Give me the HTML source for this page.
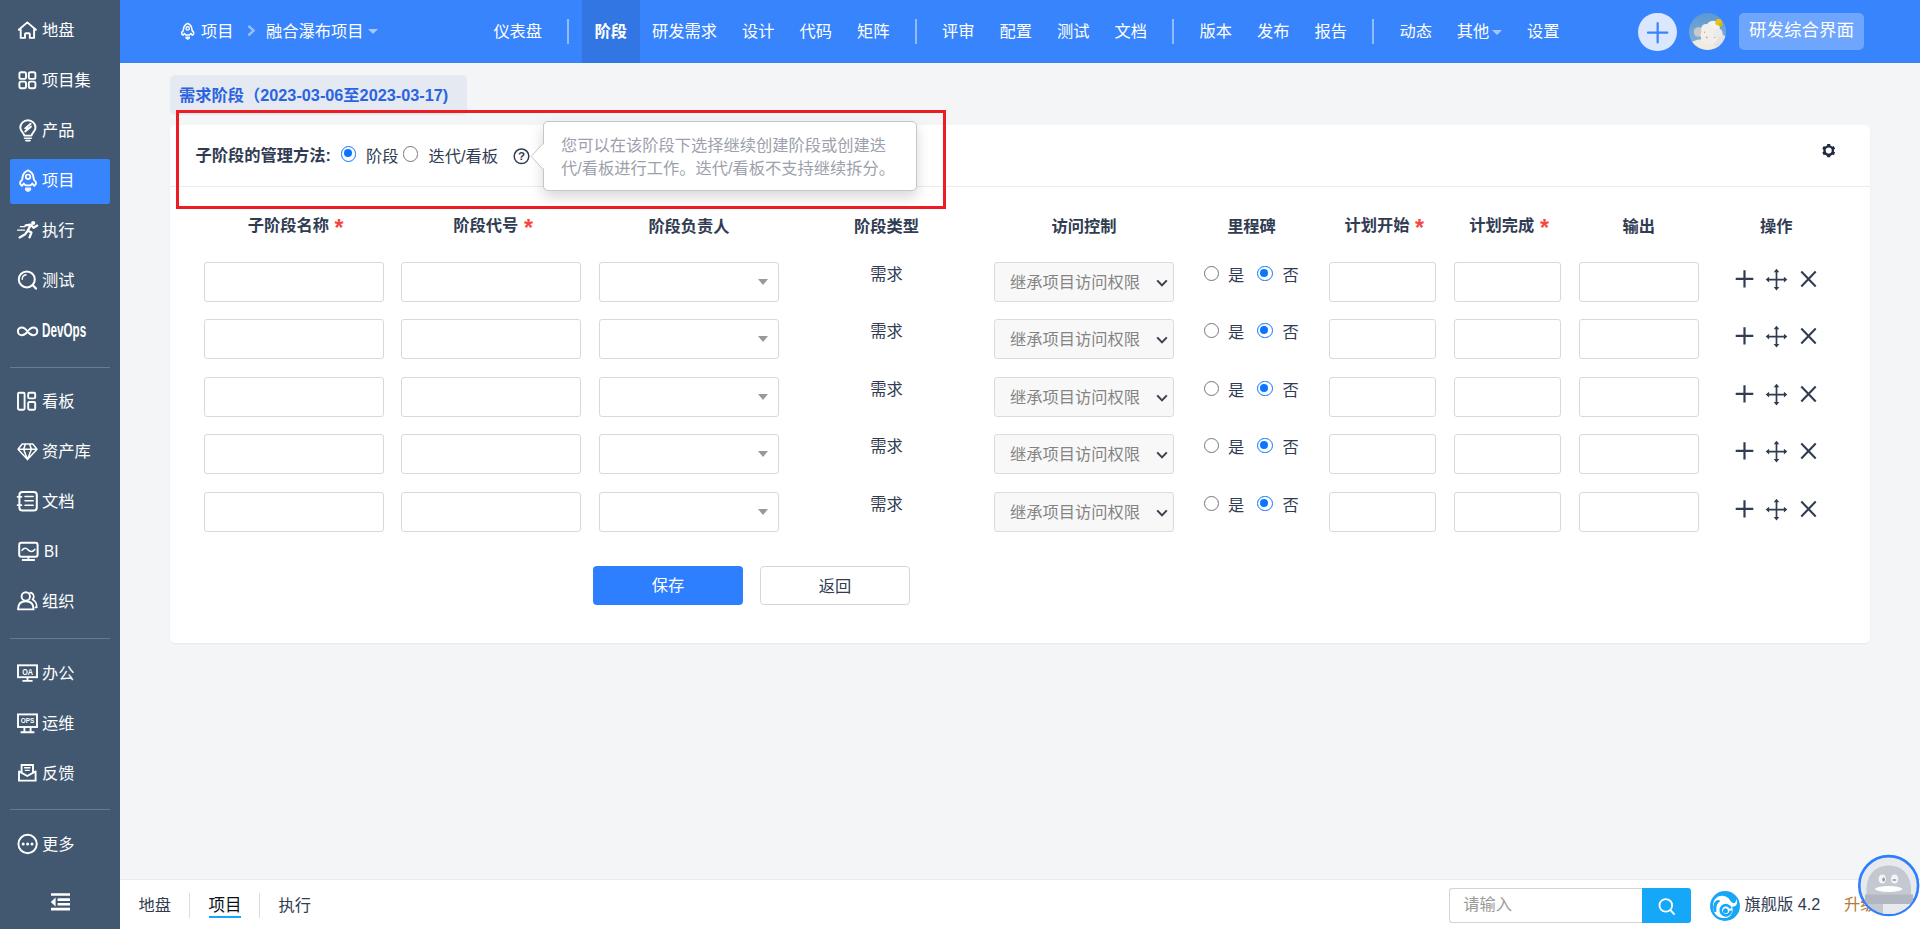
<!DOCTYPE html>
<html lang="zh-CN"><head><meta charset="utf-8"><title>融合瀑布项目 - 阶段</title>
<style>
*{box-sizing:border-box}
html,body{margin:0;padding:0}
body{width:1920px;height:929px;overflow:hidden;position:relative;background:#f4f5f7;font-family:"Liberation Sans","Noto Sans CJK SC",sans-serif;font-size:16.25px;color:#313c52;line-height:1.2}
.ic{position:absolute;display:block;overflow:visible}
#side{position:absolute;left:0;top:0;width:120px;height:929px;background:#425870}
.mi{position:absolute;left:10px;width:100px;height:45px;border-radius:2.5px}
.mi.act{background:#3884fc}
.ml{position:absolute;left:42px;height:45px;line-height:43.6px;color:#fff;font-size:16.25px;white-space:nowrap}
.mt.dev{display:inline-block;font-weight:bold;font-size:19.5px;transform:scaleX(.6);transform-origin:0 50%;letter-spacing:0}
.mt.bi{display:inline-block;font-size:17px;transform:scaleX(.9);transform-origin:0 50%;margin-left:2px}
.sdiv{position:absolute;left:10px;width:100px;height:1.25px;background:#677d96}
#head{position:absolute;left:120px;top:0;width:1800px;height:62.5px;background:#3884fc;color:#fff}
#head *{position:absolute}
.hl{top:0;height:62.5px;line-height:63px;white-space:nowrap;color:#fff;font-size:16.25px}
.ni{top:0;height:62.5px;line-height:63px;text-align:center;color:#fff;font-size:16.25px;white-space:nowrap}
.ni.act{background:#3276e3;font-weight:bold}
.nd{top:19px;width:2px;height:24.5px;background:rgba(255,255,255,.45)}
.car{position:static !important;display:inline-block;width:0;height:0;border:5px solid transparent;border-top:5.5px solid rgba(255,255,255,.55);border-bottom:0;vertical-align:middle;margin-left:3px;margin-top:-1px}
#tab{position:absolute;left:170px;top:75px;width:297px;height:39.5px;background:#e5e9f1;border-radius:5px;color:#2a64e0;font-weight:bold;font-size:16.25px;line-height:40px;padding-left:9px;white-space:nowrap}
#panel{position:absolute;left:170px;top:125px;width:1700px;height:518px;background:#fff;border-radius:5px;box-shadow:0 1px 2px rgba(0,0,0,.06)}
#sep{position:absolute;left:170px;top:186px;width:1700px;height:1px;background:#ececec}
#red{position:absolute;left:176px;top:110px;width:770px;height:98.6px;border:3px solid #ed1c24}
.th{position:absolute;top:213.2px;height:24px;line-height:24px;text-align:center;font-weight:bold;white-space:nowrap}
.req{color:#f5473f;font-weight:bold;font-size:23px;line-height:10px;vertical-align:-4.6px;margin-left:1px}
.inp{position:absolute;height:40px;background:#fff;border:1.25px solid #d9d9d9;border-radius:3px}
.car2{position:absolute;right:9.8px;top:15.6px;width:0;height:0;border:5.6px solid transparent;border-top:6px solid #999;border-bottom:0}
.tx{position:absolute;height:24px;line-height:24px;text-align:center}
.sel{position:absolute;height:40px;background:#f8f8f8;border:1.25px solid #dcdcdc;border-radius:3px;color:#848484;line-height:38px;padding-left:15px;white-space:nowrap}
.rad{position:absolute;width:15.6px;height:15.6px;border-radius:50%;border:1.3px solid #767676;background:#fff}
.rad.on{border:1.7px solid #0b75ff}
.rad.on:after{content:"";position:absolute;left:2.1px;top:2.1px;width:8px;height:8px;border-radius:50%;background:#0b75ff}
.rt{position:absolute;height:24px;line-height:24px;margin-top:.6px}
.btn{position:absolute;top:565.8px;width:150px;height:38.8px;line-height:38px;text-align:center;border-radius:4px;font-size:16.25px}
#foot{position:absolute;left:120px;top:878.8px;width:1800px;height:50px;background:#fff;border-top:1px solid #e9ebef}
#foot .ft{position:absolute;top:0;height:49px;line-height:50px;white-space:nowrap}
</style></head><body>
<div id="side">
<div class="mi" style="top:9px"></div><svg class="ic" style="left:14px;top:16.5px" width="26" height="26" viewBox="14 16.5 26 26" fill="none" stroke="#fff" stroke-width="1.9" stroke-linejoin="round" stroke-linecap="round"><path d="M18.8 29.3 L27.3 21.9 L35.9 29.3 M20.7 28.5 V37.4 H25 V33.8 Q25 32.8 26 32.8 H28.8 Q29.8 32.8 29.8 33.8 V37.4 H34.1 V28.5"/></svg><div class="ml" style="top:9px"><span class="mt">地盘</span></div>
<div class="mi" style="top:59px"></div><svg class="ic" style="left:14px;top:66.5px" width="26" height="26" viewBox="14 66.5 26 26" fill="none" stroke="#fff" stroke-width="1.9" stroke-linejoin="round" stroke-linecap="round"><rect x="19.4" y="71.8" width="6.6" height="6.6" rx="1.6"/><rect x="19.4" y="81.1" width="6.6" height="6.6" rx="1.6"/><rect x="28.8" y="71.8" width="6.6" height="6.6" rx="1.6"/><rect x="28.8" y="81.1" width="6.6" height="6.6" rx="1.6"/></svg><div class="ml" style="top:59px"><span class="mt">项目集</span></div>
<div class="mi" style="top:109px"></div><svg class="ic" style="left:14px;top:118.5px" width="26" height="26" viewBox="14 118.5 26 26" fill="none" stroke="#fff" stroke-width="1.9" stroke-linejoin="round" stroke-linecap="round"><path d="M24.2 135.1 C24.2 132.7 20.3 130.7 20.3 127.3 A7.6 7.6 0 0 1 35.5 127.3 C35.5 130.7 31.6 132.7 31.6 135.1 Z"/><path d="M24.6 137.8 H31.2 M25.8 140.1 H30" stroke-width="1.6"/><path d="M30.6 123.3 L25.2 127.9 H28.4 L31 125.9 M25.2 130.9 L30.6 126.5 " stroke-width="1.9"/></svg><div class="ml" style="top:109px"><span class="mt">产品</span></div>
<div class="mi act" style="top:159px"></div><svg class="ic" style="left:14px;top:167.5px" width="26" height="26" viewBox="14 167.5 26 26" fill="none" stroke="#fff" stroke-width="1.9" stroke-linejoin="round" stroke-linecap="round"><path d="M28.05 169.9 C24.6 171.3 22.7 174.3 22.5 177.3 C22.3 178.3 22.1 179.3 21.9 179.7 C20.6 180.5 20.1 181.5 20.1 182.5 C20.1 183.9 20.8 184.9 21.9 185.3 L23.8 183.1 L25.6 184.9 H30.5 L32.3 183.1 L34.2 185.3 C35.3 184.9 36 183.9 36 182.5 C36 181.5 35.5 180.5 34.2 179.7 C34 179.3 33.8 178.3 33.5 177.3 C33.4 174.3 31.5 171.3 28.05 169.9 Z" stroke-width="1.9"/><circle cx="28.05" cy="176.3" r="2.3" stroke-width="1.7"/><path d="M25 186.9 H31.1 V189.7 L28.05 191.7 L25 189.7 Z" fill="#fff" stroke="none" opacity=".9"/></svg><div class="ml" style="top:159px"><span class="mt">项目</span></div>
<div class="mi" style="top:209px"></div><svg class="ic" style="left:14px;top:217.2px" width="26" height="26" viewBox="14 217.2 26 26" fill="none" stroke="#fff" stroke-width="1.9" stroke-linejoin="round" stroke-linecap="round"><circle cx="33.2" cy="223.2" r="2.1" fill="#fff" stroke="none"/><path d="M25.6 225.6 L30.6 224.79999999999998 L33.6 228.0 L37.2 225.79999999999998 M30.8 225.2 L27.8 230.6 L31.4 232.79999999999998 L29.6 237.6 M27.6 231.2 L24.8 234.79999999999998 L19.6 237.6" stroke-width="2.3"/><path d="M20.4 226.79999999999998 H25 M17.6 230.39999999999998 H24.6" stroke-width="1.3"/></svg><div class="ml" style="top:209px"><span class="mt">执行</span></div>
<div class="mi" style="top:259px"></div><svg class="ic" style="left:14px;top:266.5px" width="26" height="26" viewBox="14 266.5 26 26" fill="none" stroke="#fff" stroke-width="1.9" stroke-linejoin="round" stroke-linecap="round"><circle cx="26.8" cy="278.9" r="8" stroke-width="2"/><path d="M32.8 284.7 L36 288.1" stroke-width="2.2"/><path d="M22.2 278.7 A4.6 4.6 0 0 1 26 274.3" stroke-width="1.4"/></svg><div class="ml" style="top:259px"><span class="mt">测试</span></div>
<div class="mi" style="top:309px"></div><svg class="ic" style="left:14px;top:317.5px" width="26" height="26" viewBox="14 317.5 26 26" fill="none" stroke="#fff" stroke-width="1.9" stroke-linejoin="round" stroke-linecap="round"><path d="M27.6 331.1 C25.6 327.9 23.6 326.9 21.8 326.9 A3.9 3.9 0 0 0 21.8 334.7 C23.6 334.7 25.6 333.7 27.6 331.1 C29.6 327.9 31.6 326.9 33.4 326.9 A3.9 3.9 0 0 1 33.4 334.7 C31.6 334.7 29.6 333.7 27.6 331.1 Z" stroke-width="2"/></svg><div class="ml" style="top:309px"><span class="mt dev">DevOps</span></div>
<div class="mi" style="top:380.25px"></div><svg class="ic" style="left:14px;top:387.75px" width="26" height="26" viewBox="14 387.75 26 26" fill="none" stroke="#fff" stroke-width="1.9" stroke-linejoin="round" stroke-linecap="round"><rect x="18" y="392.55" width="6.6" height="17" rx="1.2"/><rect x="28.2" y="392.55" width="7" height="5.6" rx="1.2"/><rect x="28.2" y="401.75" width="7" height="7.8" rx="1.2"/></svg><div class="ml" style="top:380.25px"><span class="mt">看板</span></div>
<div class="mi" style="top:430.25px"></div><svg class="ic" style="left:14px;top:437.75px" width="26" height="26" viewBox="14 437.75 26 26" fill="none" stroke="#fff" stroke-width="1.9" stroke-linejoin="round" stroke-linecap="round"><path d="M22.2 443.75 H32.8 L37 448.95 L27.5 459.35 L18 448.95 Z M18 448.95 H37 M27.5 459.35 L23.6 448.95 L25.4 443.75 M27.5 459.35 L31.4 448.95 L29.6 443.75" stroke-width="1.5"/></svg><div class="ml" style="top:430.25px"><span class="mt">资产库</span></div>
<div class="mi" style="top:480.25px"></div><svg class="ic" style="left:14px;top:487.75px" width="26" height="26" viewBox="14 487.75 26 26" fill="none" stroke="#fff" stroke-width="1.9" stroke-linejoin="round" stroke-linecap="round"><rect x="19.4" y="491.75" width="17.4" height="18.6" rx="3" stroke-width="2"/><path d="M17.6 496.55 H21.4 M17.6 504.95 H21.4" stroke-width="1.8"/><path d="M25 496.35 H33.2 M25 500.55 H33.2 M25 504.95 H33.2" stroke-width="1.5"/></svg><div class="ml" style="top:480.25px"><span class="mt">文档</span></div>
<div class="mi" style="top:530.25px"></div><svg class="ic" style="left:14px;top:537.75px" width="26" height="26" viewBox="14 537.75 26 26" fill="none" stroke="#fff" stroke-width="1.9" stroke-linejoin="round" stroke-linecap="round"><rect x="19.2" y="542.55" width="18.4" height="14" rx="2.2" stroke-width="2"/><path d="M28.4 556.75 V559.55 M22.6 559.75 H34.2" stroke-width="1.8"/><path d="M22 550.15 C24 547.15 26.4 547.75 28.2 549.75 C30 551.75 32.6 551.75 34.8 549.15" stroke-width="1.6"/></svg><div class="ml" style="top:530.25px"><span class="mt bi">BI</span></div>
<div class="mi" style="top:580.25px"></div><svg class="ic" style="left:14px;top:588.45px" width="26" height="26" viewBox="14 588.45 26 26" fill="none" stroke="#fff" stroke-width="1.9" stroke-linejoin="round" stroke-linecap="round"><circle cx="25.8" cy="596.85" r="4.2"/><path d="M18 609.85 C18 604.0500000000001 21.6 601.6500000000001 25.8 601.6500000000001 C30 601.6500000000001 33.6 604.0500000000001 33.6 609.85 Z"/><path d="M30.2 593.0500000000001 A4 4 0 0 1 32.4 600.0500000000001 C35.2 601.25 36.8 604.0500000000001 36.8 607.85 H35.4" stroke-width="1.6"/></svg><div class="ml" style="top:580.25px"><span class="mt">组织</span></div>
<div class="mi" style="top:651.5px"></div><svg class="ic" style="left:14px;top:660.0px" width="26" height="26" viewBox="14 660.0 26 26" fill="none" stroke="#fff" stroke-width="1.9" stroke-linejoin="round" stroke-linecap="round"><rect x="18" y="665.3" width="19" height="11.9" stroke-width="1.9" stroke-linejoin="miter"/><path d="M27.5 677.2 V680.8 M22.4 680.9 H32.6" stroke-width="1.9" stroke-linecap="butt"/><text x="27.6" y="674.6" text-anchor="middle" font-family="Liberation Sans,sans-serif" font-weight="bold" font-size="9.2" fill="#fff" stroke="none" textLength="10.8" lengthAdjust="spacingAndGlyphs">OA</text></svg><div class="ml" style="top:651.5px"><span class="mt">办公</span></div>
<div class="mi" style="top:701.5px"></div><svg class="ic" style="left:14px;top:709.7px" width="26" height="26" viewBox="14 709.7 26 26" fill="none" stroke="#fff" stroke-width="1.9" stroke-linejoin="round" stroke-linecap="round"><rect x="18" y="714.1" width="19" height="12.6" stroke-width="1.9" stroke-linejoin="miter"/><path d="M24.4 726.7 V731.7 M30.6 726.7 V731.7 M20.6 731.9000000000001 H34.4" stroke-width="1.9" stroke-linecap="butt"/><text x="27.5" y="722.9000000000001" text-anchor="middle" font-family="Liberation Sans,sans-serif" font-weight="bold" font-size="7.8" fill="#fff" stroke="none" textLength="13.6" lengthAdjust="spacingAndGlyphs">OPS</text></svg><div class="ml" style="top:701.5px"><span class="mt">运维</span></div>
<div class="mi" style="top:751.5px"></div><svg class="ic" style="left:14px;top:760.0px" width="26" height="26" viewBox="14 760.0 26 26" fill="none" stroke="#fff" stroke-width="1.9" stroke-linejoin="round" stroke-linecap="round"><path d="M19 771.4 V780.6 H35.6 V771.4 M19 771.4 L27.3 776.0 L35.6 771.4 M21.6 772.6 V765.0 H33 V772.6" stroke-linejoin="miter" stroke-width="1.9"/><path d="M24.6 767.8 H30 M25.4 770.4 H29.2" stroke-width="1.4"/></svg><div class="ml" style="top:751.5px"><span class="mt">反馈</span></div>
<div class="mi" style="top:822.75px"></div><svg class="ic" style="left:14px;top:831.25px" width="26" height="26" viewBox="14 831.25 26 26" fill="none" stroke="#fff" stroke-width="1.9" stroke-linejoin="round" stroke-linecap="round"><circle cx="27.6" cy="844.25" r="9.2" stroke-width="1.9"/><circle cx="23.2" cy="844.25" r="1.5" fill="#fff" stroke="none"/><circle cx="27.6" cy="844.25" r="1.5" fill="#fff" stroke="none"/><circle cx="32" cy="844.25" r="1.5" fill="#fff" stroke="none"/></svg><div class="ml" style="top:822.75px"><span class="mt">更多</span></div>
<div class="sdiv" style="top:366.5px"></div>
<div class="sdiv" style="top:637.75px"></div>
<div class="sdiv" style="top:809px"></div>
<svg class="ic" style="left:48px;top:890px" width="26" height="24" viewBox="48 890 26 24"><path d="M51 893.2H70V895.8H51Z M57.6 898.3H70V900.9H57.6Z M57.6 902.9H70V905.5H57.6Z M51 907.8H70V910.4H51Z M55.6 897.4V906.4L50.8 901.9Z" fill="#fff"/></svg>
</div>
<div id="head">
<svg class="ic" style="left:58px;top:19px" width="20" height="26" viewBox="0 0 20 26" fill="none" stroke="#fff" stroke-linejoin="round"><g transform="translate(9.7 12.6) scale(.76) translate(-28.05 0)"><path d="M28.05 -10.6 C24.6 -9.2 22.7 -6.2 22.5 -3.2 C22.3 -2.2 22.1 -1.2 21.9 -0.8 C20.6 0 20.1 1 20.1 2 C20.1 3.4 20.8 4.4 21.9 4.8 L23.8 2.6 L25.6 4.4 H30.5 L32.3 2.6 L34.2 4.8 C35.3 4.4 36 3.4 36 2 C36 1 35.5 0 34.2 -0.8 C34 -1.2 33.8 -2.2 33.5 -3.2 C33.4 -6.2 31.5 -9.2 28.05 -10.6 Z" stroke-width="2"/><circle cx="28.05" cy="-4.2" r="2.2" stroke-width="1.8"/><path d="M25 6.4 H31.1 V9.2 L28.05 11.2 L25 9.2 Z" fill="#fff" stroke="none" opacity=".9"/></g></svg>
<span class="hl" style="left:81px">项目</span>
<svg class="ic" style="left:126px;top:22px" width="10" height="18" viewBox="0 0 10 18"><path d="M2.4 3.9 L7.6 8.6 L2.4 13.3" fill="none" stroke="rgba(255,255,255,.5)" stroke-width="2.3"/></svg>
<span class="hl" style="left:146px">融合瀑布项目</span><i class="car" style="position:absolute !important;left:245px;top:30px"></i>
<a class="ni" style="left:calc(-120px + 481px);width:73.5px">仪表盘</a>
<i class="nd" style="left:calc(-120px + 567.1px)"></i>
<a class="ni act" style="left:calc(-120px + 582px);width:57.5px">阶段</a>
<a class="ni" style="left:calc(-120px + 639.5px);width:90px">研发需求</a>
<a class="ni" style="left:calc(-120px + 729.5px);width:57.5px">设计</a>
<a class="ni" style="left:calc(-120px + 787px);width:57.5px">代码</a>
<a class="ni" style="left:calc(-120px + 844.5px);width:57.5px">矩阵</a>
<i class="nd" style="left:calc(-120px + 914.6px)"></i>
<a class="ni" style="left:calc(-120px + 929.5px);width:57.5px">评审</a>
<a class="ni" style="left:calc(-120px + 987px);width:57.5px">配置</a>
<a class="ni" style="left:calc(-120px + 1044.5px);width:57.5px">测试</a>
<a class="ni" style="left:calc(-120px + 1102px);width:57.5px">文档</a>
<i class="nd" style="left:calc(-120px + 1172.1px)"></i>
<a class="ni" style="left:calc(-120px + 1187px);width:57.5px">版本</a>
<a class="ni" style="left:calc(-120px + 1244.5px);width:57.5px">发布</a>
<a class="ni" style="left:calc(-120px + 1302px);width:57.5px">报告</a>
<i class="nd" style="left:calc(-120px + 1372.1px)"></i>
<a class="ni" style="left:calc(-120px + 1387px);width:57.5px">动态</a>
<a class="ni" style="left:calc(-120px + 1444.5px);width:70px">其他<i class="car"></i></a>
<a class="ni" style="left:calc(-120px + 1514.5px);width:57.5px">设置</a>
<div style="left:1518.4px;top:12.6px;width:38.6px;height:38.6px;border-radius:50%;background:#dbe7fe"></div>
<svg class="ic" style="left:1518px;top:12.5px" width="39" height="39" viewBox="0 0 39 39"><path d="M19.65 10.2V29.4M10 19.7H29.3" stroke="#3884fc" stroke-width="2.2" stroke-linecap="round" fill="none"/></svg>
<svg class="ic" style="left:1569px;top:13px" width="37" height="37" viewBox="0 0 37 37"><defs><clipPath id="av"><circle cx="18.5" cy="18.5" r="18.5"/></clipPath><linearGradient id="sky" x1="0" y1="0" x2="0" y2="1"><stop offset="0" stop-color="#5b98d1"/><stop offset="1" stop-color="#86b3d8"/></linearGradient></defs><g clip-path="url(#av)"><rect width="37" height="37" fill="url(#sky)"/><ellipse cx="15" cy="35" rx="17" ry="9" fill="#efeae2"/><circle cx="31" cy="28" r="7" fill="#e4e3e2"/><circle cx="9.5" cy="19" r="4.8" fill="#c8c9cb"/><circle cx="24" cy="14.5" r="6.8" fill="#f3f2f1"/><circle cx="17" cy="16" r="5" fill="#eeeeee"/><circle cx="20.5" cy="22.5" r="9" fill="#f2efeb"/><circle cx="29" cy="20" r="4.6" fill="#ebebeb"/><circle cx="29.6" cy="9.2" r="3.3" fill="#e3c417"/><circle cx="31.6" cy="11.4" r="2" fill="#d9b70f"/><circle cx="15.6" cy="19.2" r=".6" fill="#b58c7a"/><circle cx="25.8" cy="24.4" r=".6" fill="#b58c7a"/><ellipse cx="17.8" cy="24.6" rx=".7" ry="1" fill="#d58a84"/></g></svg>
<div style="left:1619px;top:13px;width:125px;height:37px;border-radius:5px;background:rgba(255,255,255,.28);font-size:17.5px;line-height:35px;text-align:center;color:#fff">研发综合界面</div>
</div>

<div id="tab">需求阶段（2023-03-06至2023-03-17)</div>
<div id="panel"></div>
<div id="sep"></div>
<div id="m1" style="position:absolute;left:195.5px;top:143px;height:24px;line-height:24px;font-weight:bold;white-space:nowrap">子阶段的管理方法:</div>
<i class="rad on" style="left:340.5px;top:146.2px"></i><div class="rt" style="left:366px;top:143px">阶段</div>
<i class="rad" style="left:402.5px;top:146.2px"></i><div class="rt" style="left:428.5px;top:143px">迭代/看板</div>
<svg class="ic" style="left:512px;top:147px" width="19" height="19" viewBox="0 0 19 19"><circle cx="9.5" cy="9.3" r="7.3" fill="none" stroke="#313c52" stroke-width="1.5"/><text x="9.5" y="13.4" text-anchor="middle" font-family="Liberation Sans,sans-serif" font-weight="bold" font-size="11.5" fill="#313c52">?</text></svg>
<div id="pop" style="position:absolute;left:542.5px;top:120.8px;width:374.3px;height:69.8px;background:#fff;border:1px solid #c6c6c6;border-radius:5px;box-shadow:0 6px 14px rgba(0,0,0,.16);color:#9ca1ab;line-height:23.2px;padding:12.1px 0 0 17.5px;white-space:nowrap">您可以在该阶段下选择继续创建阶段或创建迭<br>代/看板进行工作。迭代/看板不支持继续拆分。</div>
<svg class="ic" style="left:530px;top:143px" width="14" height="27" viewBox="0 0 14 27"><path d="M13 0.6 L1.2 13.4 L13 26.2" fill="#fff" stroke="#c6c6c6" stroke-width="1"/><path d="M13.3 1.4V25.4" stroke="#fff" stroke-width="1.8"/></svg>
<svg class="ic" style="left:1820.6px;top:143.4px" width="15.6" height="15.6" viewBox="0 0 17 17"><circle cx="8.4" cy="8.3" r="4.6" fill="none" stroke="#1f2a40" stroke-width="2.6"/><path d="M8.4 1.2V3.2M8.4 13.4V15.4M2.2 4.8L4 5.8M12.8 10.8L14.6 11.8M2.2 11.8L4 10.8M12.8 5.8L14.6 4.8" stroke="#1f2a40" stroke-width="3.4" fill="none"/></svg>
<div class="th" style="left:196.85px;width:197.5px;top:213.2px">子阶段名称 <b class=req>*</b></div>
<div class="th" style="left:394.35px;width:197.5px;top:213.2px">阶段代号 <b class=req>*</b></div>
<div class="th" style="left:590.25px;width:197.5px;top:214.2px">阶段负责人</div>
<div class="th" style="left:787.75px;width:197.5px;top:214.2px">阶段类型</div>
<div class="th" style="left:985.25px;width:197.5px;top:214.2px">访问控制</div>
<div class="th" style="left:1182.75px;width:137.5px;top:214.2px">里程碑</div>
<div class="th" style="left:1321.85px;width:124.75px;top:213.2px">计划开始 <b class=req>*</b></div>
<div class="th" style="left:1446.6px;width:125px;top:213.2px">计划完成 <b class=req>*</b></div>
<div class="th" style="left:1570px;width:137.5px;top:214.2px">输出</div>
<div class="th" style="left:1707.5px;width:137.5px;top:214.2px">操作</div>
<div class="inp" style="left:204px;top:262px;width:180px"></div>
<div class="inp" style="left:401px;top:262px;width:180px"></div>
<div class="inp" style="left:599px;top:262px;width:180px"><i class="car2"></i></div>
<div class="tx" style="left:787.75px;width:197.5px;top:262px">需求</div>
<div class="sel" style="left:994px;top:262px;width:180px"><span>继承项目访问权限</span><svg width="14" height="10" viewBox="0 0 14 10" style="position:absolute;left:160px;top:15px"><path d="M2.2 2.4 L7 7.4 L11.8 2.4" fill="none" stroke="#3a3f4a" stroke-width="2"/></svg></div>
<i class="rad" style="left:1203.5px;top:265.6px"></i><div class="rt" style="left:1228px;top:262px">是</div><i class="rad on" style="left:1257.3px;top:265.6px"></i><div class="rt" style="left:1282.5px;top:262px">否</div>
<div class="inp" style="left:1329px;top:262px;width:106.6px"></div>
<div class="inp" style="left:1454px;top:262px;width:106.6px"></div>
<div class="inp" style="left:1579px;top:262px;width:120px"></div>
<svg class="ic" style="left:1730px;top:264px" width="92" height="30" viewBox="1730 264 92 30" fill="none" stroke="#313c52" stroke-width="2"><path d="M1744.5 270.2V287.40000000000003 M1735.7 278.8H1753.3" stroke-width="2.2"/><path d="M1776.5 270.6V288.6 M1767.5 279.6H1785.5" stroke-width="1.7"/><path d="M1776.5 268.8L1779.3 272.2H1773.7Z M1776.5 290.40000000000003L1779.3 287.0H1773.7Z M1765.7 279.6L1769.1 276.8V282.40000000000003Z M1787.3 279.6L1783.9 276.8V282.40000000000003Z" fill="#313c52" stroke="none"/><path d="M1801.3 271.6L1815.7 286.40000000000003 M1815.7 271.6L1801.3 286.40000000000003" stroke-width="2.1"/></svg>
<div class="inp" style="left:204px;top:319px;width:180px"></div>
<div class="inp" style="left:401px;top:319px;width:180px"></div>
<div class="inp" style="left:599px;top:319px;width:180px"><i class="car2"></i></div>
<div class="tx" style="left:787.75px;width:197.5px;top:319px">需求</div>
<div class="sel" style="left:994px;top:319px;width:180px"><span>继承项目访问权限</span><svg width="14" height="10" viewBox="0 0 14 10" style="position:absolute;left:160px;top:15px"><path d="M2.2 2.4 L7 7.4 L11.8 2.4" fill="none" stroke="#3a3f4a" stroke-width="2"/></svg></div>
<i class="rad" style="left:1203.5px;top:322.6px"></i><div class="rt" style="left:1228px;top:319px">是</div><i class="rad on" style="left:1257.3px;top:322.6px"></i><div class="rt" style="left:1282.5px;top:319px">否</div>
<div class="inp" style="left:1329px;top:319px;width:106.6px"></div>
<div class="inp" style="left:1454px;top:319px;width:106.6px"></div>
<div class="inp" style="left:1579px;top:319px;width:120px"></div>
<svg class="ic" style="left:1730px;top:321px" width="92" height="30" viewBox="1730 321 92 30" fill="none" stroke="#313c52" stroke-width="2"><path d="M1744.5 327.2V344.40000000000003 M1735.7 335.8H1753.3" stroke-width="2.2"/><path d="M1776.5 327.6V345.6 M1767.5 336.6H1785.5" stroke-width="1.7"/><path d="M1776.5 325.8L1779.3 329.2H1773.7Z M1776.5 347.40000000000003L1779.3 344.0H1773.7Z M1765.7 336.6L1769.1 333.8V339.40000000000003Z M1787.3 336.6L1783.9 333.8V339.40000000000003Z" fill="#313c52" stroke="none"/><path d="M1801.3 328.6L1815.7 343.40000000000003 M1815.7 328.6L1801.3 343.40000000000003" stroke-width="2.1"/></svg>
<div class="inp" style="left:204px;top:377px;width:180px"></div>
<div class="inp" style="left:401px;top:377px;width:180px"></div>
<div class="inp" style="left:599px;top:377px;width:180px"><i class="car2"></i></div>
<div class="tx" style="left:787.75px;width:197.5px;top:377px">需求</div>
<div class="sel" style="left:994px;top:377px;width:180px"><span>继承项目访问权限</span><svg width="14" height="10" viewBox="0 0 14 10" style="position:absolute;left:160px;top:15px"><path d="M2.2 2.4 L7 7.4 L11.8 2.4" fill="none" stroke="#3a3f4a" stroke-width="2"/></svg></div>
<i class="rad" style="left:1203.5px;top:380.6px"></i><div class="rt" style="left:1228px;top:377px">是</div><i class="rad on" style="left:1257.3px;top:380.6px"></i><div class="rt" style="left:1282.5px;top:377px">否</div>
<div class="inp" style="left:1329px;top:377px;width:106.6px"></div>
<div class="inp" style="left:1454px;top:377px;width:106.6px"></div>
<div class="inp" style="left:1579px;top:377px;width:120px"></div>
<svg class="ic" style="left:1730px;top:379px" width="92" height="30" viewBox="1730 379 92 30" fill="none" stroke="#313c52" stroke-width="2"><path d="M1744.5 385.2V402.40000000000003 M1735.7 393.8H1753.3" stroke-width="2.2"/><path d="M1776.5 385.6V403.6 M1767.5 394.6H1785.5" stroke-width="1.7"/><path d="M1776.5 383.8L1779.3 387.2H1773.7Z M1776.5 405.40000000000003L1779.3 402.0H1773.7Z M1765.7 394.6L1769.1 391.8V397.40000000000003Z M1787.3 394.6L1783.9 391.8V397.40000000000003Z" fill="#313c52" stroke="none"/><path d="M1801.3 386.6L1815.7 401.40000000000003 M1815.7 386.6L1801.3 401.40000000000003" stroke-width="2.1"/></svg>
<div class="inp" style="left:204px;top:434px;width:180px"></div>
<div class="inp" style="left:401px;top:434px;width:180px"></div>
<div class="inp" style="left:599px;top:434px;width:180px"><i class="car2"></i></div>
<div class="tx" style="left:787.75px;width:197.5px;top:434px">需求</div>
<div class="sel" style="left:994px;top:434px;width:180px"><span>继承项目访问权限</span><svg width="14" height="10" viewBox="0 0 14 10" style="position:absolute;left:160px;top:15px"><path d="M2.2 2.4 L7 7.4 L11.8 2.4" fill="none" stroke="#3a3f4a" stroke-width="2"/></svg></div>
<i class="rad" style="left:1203.5px;top:437.6px"></i><div class="rt" style="left:1228px;top:434px">是</div><i class="rad on" style="left:1257.3px;top:437.6px"></i><div class="rt" style="left:1282.5px;top:434px">否</div>
<div class="inp" style="left:1329px;top:434px;width:106.6px"></div>
<div class="inp" style="left:1454px;top:434px;width:106.6px"></div>
<div class="inp" style="left:1579px;top:434px;width:120px"></div>
<svg class="ic" style="left:1730px;top:436px" width="92" height="30" viewBox="1730 436 92 30" fill="none" stroke="#313c52" stroke-width="2"><path d="M1744.5 442.2V459.40000000000003 M1735.7 450.8H1753.3" stroke-width="2.2"/><path d="M1776.5 442.6V460.6 M1767.5 451.6H1785.5" stroke-width="1.7"/><path d="M1776.5 440.8L1779.3 444.2H1773.7Z M1776.5 462.40000000000003L1779.3 459.0H1773.7Z M1765.7 451.6L1769.1 448.8V454.40000000000003Z M1787.3 451.6L1783.9 448.8V454.40000000000003Z" fill="#313c52" stroke="none"/><path d="M1801.3 443.6L1815.7 458.40000000000003 M1815.7 443.6L1801.3 458.40000000000003" stroke-width="2.1"/></svg>
<div class="inp" style="left:204px;top:492px;width:180px"></div>
<div class="inp" style="left:401px;top:492px;width:180px"></div>
<div class="inp" style="left:599px;top:492px;width:180px"><i class="car2"></i></div>
<div class="tx" style="left:787.75px;width:197.5px;top:492px">需求</div>
<div class="sel" style="left:994px;top:492px;width:180px"><span>继承项目访问权限</span><svg width="14" height="10" viewBox="0 0 14 10" style="position:absolute;left:160px;top:15px"><path d="M2.2 2.4 L7 7.4 L11.8 2.4" fill="none" stroke="#3a3f4a" stroke-width="2"/></svg></div>
<i class="rad" style="left:1203.5px;top:495.6px"></i><div class="rt" style="left:1228px;top:492px">是</div><i class="rad on" style="left:1257.3px;top:495.6px"></i><div class="rt" style="left:1282.5px;top:492px">否</div>
<div class="inp" style="left:1329px;top:492px;width:106.6px"></div>
<div class="inp" style="left:1454px;top:492px;width:106.6px"></div>
<div class="inp" style="left:1579px;top:492px;width:120px"></div>
<svg class="ic" style="left:1730px;top:494px" width="92" height="30" viewBox="1730 494 92 30" fill="none" stroke="#313c52" stroke-width="2"><path d="M1744.5 500.2V517.4 M1735.7 508.8H1753.3" stroke-width="2.2"/><path d="M1776.5 500.6V518.6 M1767.5 509.6H1785.5" stroke-width="1.7"/><path d="M1776.5 498.8L1779.3 502.2H1773.7Z M1776.5 520.4L1779.3 517.0H1773.7Z M1765.7 509.6L1769.1 506.8V512.4Z M1787.3 509.6L1783.9 506.8V512.4Z" fill="#313c52" stroke="none"/><path d="M1801.3 501.6L1815.7 516.4 M1815.7 501.6L1801.3 516.4" stroke-width="2.1"/></svg>
<div class="btn" style="left:593px;background:#2e7fff;color:#fff">保存</div>
<div class="btn" style="left:760px;background:#fff;color:#313c52;border:1.25px solid #d6d6d6">返回</div>
<div id="red"></div>

<div id="foot">
<span class="ft" style="left:18.5px">地盘</span><i style="position:absolute;left:69px;top:13px;width:1px;height:25px;background:#dcdcdc"></i>
<span class="ft" style="left:88.5px;color:#0b0f18;font-size:16.5px">项目</span><i style="position:absolute;left:89px;top:36px;width:32px;height:2.3px;background:#16a8f8"></i>
<i style="position:absolute;left:139px;top:13px;width:1px;height:25px;background:#dcdcdc"></i>
<span class="ft" style="left:158.5px">执行</span>
<div style="position:absolute;left:1329.3px;top:8.5px;width:193.2px;height:34.5px;border:1.25px solid #d4d4d4;border-right:0;border-radius:3px 0 0 3px;color:#9a9a9a;line-height:30px;padding-left:13px;font-size:16.25px">请输入</div>
<div style="position:absolute;left:1522.3px;top:8.5px;width:48.9px;height:34.5px;background:#16a8f8;border-radius:0 3px 3px 0"></div>
<svg class="ic" style="left:1535px;top:15px" width="24" height="24" viewBox="0 0 24 24"><circle cx="10.8" cy="10.4" r="6.3" fill="none" stroke="#fff" stroke-width="1.8"/><path d="M15.4 15.2L19.6 19.6" stroke="#fff" stroke-width="1.9"/></svg>
<svg class="ic" style="left:1590.3px;top:11.4px" width="30" height="30" viewBox="0 0 30 30"><circle cx="15" cy="15" r="14.95" fill="#18a6f7"/><path d="M3 13.4C3.4 11 4 9.6 4.8 8.4C7 5.4 10 4.5 12.4 4.7C15 5 16.6 5.8 18 6.8C19.8 8.4 20.6 10.6 22 11.6C23.4 12.4 24.6 12.4 25.2 11.6C26 10.6 26.2 9.4 26.2 8.1C27.2 10 27.4 11.6 26.8 12.9C26.2 14.4 25 15.2 23.6 15.6L22 15.9C22.8 17.4 22.9 18.8 22.5 20.4C22 22.4 21.2 23.8 20 25C18.6 26.4 16.8 27.1 14.9 27.1C12.6 27.1 10.6 26.8 8.9 26C6.8 25 5.2 23.4 4.3 21.5C3.2 19 2.8 16 3 13.4Z" fill="#fff"/><path d="M4.8 10.9C5.8 9.6 7 9 8.3 8.9C9.4 8.9 10 9.6 9.9 10.4C8.4 11.4 7.4 12.8 6.8 14.4C6.2 16.4 6.2 18.6 6.6 20.5L4.5 21.3C3.4 19.4 3.2 17.6 3.2 15.9C3.4 14 4 12.2 4.8 10.9Z" fill="#18a6f7"/><path d="M20.6 17.4A5.1 5.1 0 1 0 20.9 19.6" fill="none" stroke="#18a6f7" stroke-width="2.7"/><path d="M13.6 21.6C13 19.2 14.6 17.6 16.4 18" fill="none" stroke="#18a6f7" stroke-width="1.2"/><circle cx="15.7" cy="20.1" r="2.3" fill="#18a6f7"/></svg>
<span class="ft" style="left:1624.5px;top:-1.2px;font-size:16.25px">旗舰版 4.2</span>
<span class="ft" style="left:1724px;top:-.8px;color:#b5793a">升级</span>
</div>
<svg class="ic" style="left:1857px;top:854px" width="63" height="63" viewBox="0 0 63 63"><defs><clipPath id="rb"><circle cx="31.7" cy="31.5" r="28.6"/></clipPath></defs><circle cx="31.7" cy="31.5" r="29.4" fill="#e8e9ed" stroke="#2e7fff" stroke-width="2.6"/><g clip-path="url(#rb)"><path d="M9.5 63V36C9.5 20 19 11.5 31.7 11.5C44.4 11.5 54 20 54 36V63Z" fill="#c4c8d0"/><rect x="8" y="40.5" width="48" height="9.5" fill="#b1b6c0"/><rect x="26" y="50" width="30" height="14" fill="#e9eaee"/><ellipse cx="31.7" cy="35" rx="13.6" ry="2.9" fill="#fff"/><ellipse cx="25.3" cy="25" rx="3.7" ry="4.6" fill="#f4f5f7"/><ellipse cx="37.6" cy="25" rx="3.7" ry="4.6" fill="#f4f5f7"/><ellipse cx="26.6" cy="25.6" rx="1.3" ry="2" fill="#9097a3"/><path d="M35.6 26h3.6" stroke="#9097a3" stroke-width="1.3"/></g></svg>
</body></html>
